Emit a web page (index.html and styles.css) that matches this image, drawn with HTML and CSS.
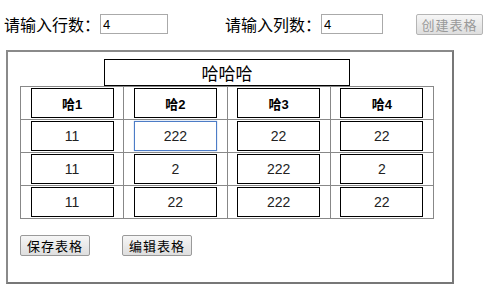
FILE: index.html
```html
<!DOCTYPE html>
<html lang="zh">
<head>
    <meta charset="UTF-8">
    <title>动态表格</title>
    <link rel="stylesheet" href="styles.css">
</head>
<body>
    <div id="bar">
        <label>请输入行数：</label>
        <input type="text" id="rows" value="4">
        <label>请输入列数：</label>
        <input type="text" id="cols" value="4">
        <button id="create" disabled>创建表格</button>
    </div>
    <div id="box">
        <div id="wrap">
            <input type="text" id="caption" value="哈哈哈">
            <table id="grid">
                <tr class="head">
                    <td><input type="text" value="哈1"></td>
                    <td><input type="text" value="哈2"></td>
                    <td><input type="text" value="哈3"></td>
                    <td><input type="text" value="哈4"></td>
                </tr>
                <tr>
                    <td><input type="text" value="11"></td>
                    <td><input type="text" class="focus" value="222"></td>
                    <td><input type="text" value="22"></td>
                    <td><input type="text" value="22"></td>
                </tr>
                <tr>
                    <td><input type="text" value="11"></td>
                    <td><input type="text" value="2"></td>
                    <td><input type="text" value="222"></td>
                    <td><input type="text" value="2"></td>
                </tr>
                <tr>
                    <td><input type="text" value="11"></td>
                    <td><input type="text" value="22"></td>
                    <td><input type="text" value="222"></td>
                    <td><input type="text" value="22"></td>
                </tr>
            </table>
        </div>
        <div id="btns">
            <button>保存表格</button>
            <button>编辑表格</button>
        </div>
    </div>
</body>
</html>
```

FILE: styles.css
```css
*{
    margin: 0;
    padding: 0;
    box-sizing: border-box;
}
body{
    font-family: "Liberation Sans", "Noto Sans CJK SC", sans-serif;
    color: #000;
    background: #fff;
}
input{
    font-family: "Liberation Sans", "Noto Sans CJK SC", sans-serif;
    outline: none;
}
button{
    font-family: "Noto Sans CJK SC", sans-serif;
    font-size: 13px;
    letter-spacing: 1px;
    height: 21px;
    border: 1px solid #9a9a9a;
    border-radius: 2px;
    background: linear-gradient(#f6f6f6, #dedede);
    color: #000;
}
#bar{
    display: flex;
    align-items: center;
    height: 20px;
    margin: 14px 0 0 4px;
}
#bar label{
    font-family: "Noto Sans CJK SC", sans-serif;
    font-size: 16px;
    width: 96px;
    line-height: 20px;
}
#bar input{
    height: 20px;
    border: 1px solid #aaa;
    font-size: 13px;
    padding: 0 2px;
}
#rows{
    width: 68px;
    margin-right: 57px;
}
#cols{
    width: 62px;
    margin-right: 33px;
}
#create{
    width: 67px;
    color: #999;
    border-color: #b5b5b5;
}
#box{
    width: 448px;
    height: 234px;
    margin: 16px 0 0 6px;
    border: 2px solid #8a8a8a;
    border-right-color: #777;
    border-bottom-color: #777;
    padding: 7px 0 0 12px;
}
#wrap{
    width: 414px;
    display: flex;
    flex-direction: column;
    align-items: center;
}
#caption{
    width: 246px;
    height: 27px;
    border: 1px solid #000;
    text-align: center;
    font-family: "Noto Sans CJK SC", sans-serif;
    font-size: 17px;
}
#grid{
    width: 414px;
    border-collapse: collapse;
}
#grid td{
    border: 1px solid #888;
    padding: 1px 0 0;
    height: 33px;
    text-align: center;
    vertical-align: top;
}
#grid td input{
    width: 83px;
    height: 30px;
    border: 1px solid #000;
    text-align: center;
    font-size: 14px;
    color: #222;
}
#grid .head input{
    font-weight: bold;
    font-size: 13px;
    color: #000;
}
#grid td input.focus{
    border-color: #4d7cc6;
    box-shadow: 0 0 1px #7aa2dd;
}
#btns{
    display: flex;
    gap: 32px;
    margin-top: 16px;
}
#btns button{
    width: 70px;
}
```
